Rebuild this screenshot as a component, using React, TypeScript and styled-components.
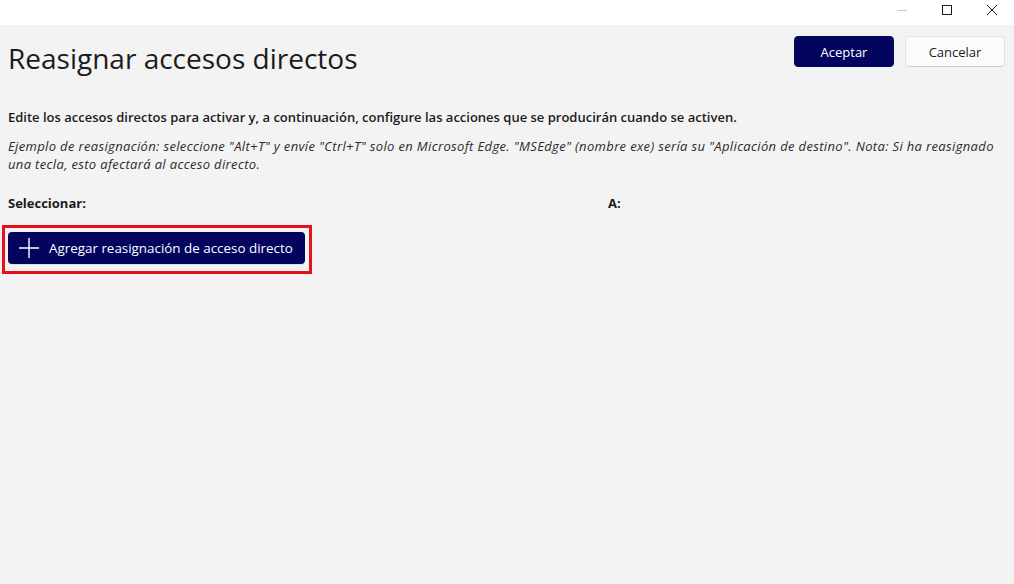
import React from "react";
import styled, { createGlobalStyle } from "styled-components";

const GlobalStyle = createGlobalStyle`
  html, body {
    margin: 0;
    padding: 0;
    height: 100%;
    background: #f3f3f3;
    font-family: "Open Sans", "Noto Sans", sans-serif;
    color: #1b1b1b;
  }
`;

const App = () => {
  return (
    <Window>
      <GlobalStyle />
      <TitleBar>
        <CaptionButton aria-label="Minimizar">
          <svg width="10" height="10" viewBox="0 0 10 10">
            <line x1="0" y1="5.5" x2="10" y2="5.5" stroke="#c8c8c8" strokeWidth="1" />
          </svg>
        </CaptionButton>
        <CaptionButton aria-label="Maximizar">
          <svg width="10" height="10" viewBox="0 0 10 10">
            <rect x="0.5" y="0.5" width="9" height="9" fill="none" stroke="#1b1b1b" strokeWidth="1" />
          </svg>
        </CaptionButton>
        <CaptionButton aria-label="Cerrar">
          <svg width="10" height="10" viewBox="0 0 10 10">
            <path d="M0 0 L10 10 M10 0 L0 10" stroke="#1b1b1b" strokeWidth="1" />
          </svg>
        </CaptionButton>
      </TitleBar>
      <Body>
        <Header>
          <Title>Reasignar accesos directos</Title>
          <Actions>
            <DialogButton primary>Aceptar</DialogButton>
            <DialogButton>Cancelar</DialogButton>
          </Actions>
        </Header>
        <Lead>
          Edite los accesos directos para activar y, a continuación, configure las acciones que se producirán cuando se activen.
        </Lead>
        <Example>
          Ejemplo de reasignación: seleccione "Alt+T" y envíe "Ctrl+T" solo en Microsoft Edge. "MSEdge" (nombre exe) sería su "Aplicación de destino". Nota: Si ha reasignado una tecla, esto afectará al acceso directo.
        </Example>
        <Columns>
          <ColumnLabel>Seleccionar:</ColumnLabel>
          <ColumnLabel>A:</ColumnLabel>
        </Columns>
        <Highlight>
          <AddButton>
            <svg width="20" height="20" viewBox="0 0 20 20">
              <path d="M10 0 V20 M0 10 H20" stroke="#fff" strokeWidth="1.4" />
            </svg>
            Agregar reasignación de acceso directo
          </AddButton>
        </Highlight>
      </Body>
    </Window>
  );
};

export default App;

const Window = styled.div`
  width: 1014px;
  height: 584px;
  display: flex;
  flex-direction: column;
  background: #f3f3f3;
  overflow: hidden;
`;

const TitleBar = styled.div`
  height: 25px;
  background: #ffffff;
  display: flex;
  justify-content: flex-end;
  align-items: center;
`;

const CaptionButton = styled.div`
  width: 45px;
  height: 25px;
  display: flex;
  align-items: center;
  justify-content: center;
  margin-top: -5px;
`;

const Body = styled.div`
  flex: 1;
  padding: 12px 9px 0 8px;
  display: flex;
  flex-direction: column;
`;

const Header = styled.div`
  display: flex;
  justify-content: space-between;
  align-items: flex-start;
`;

const Title = styled.h1`
  margin: 3px 0 0;
  font-size: 28px;
  font-weight: 400;
  line-height: 36px;
  color: #1b1b1b;
`;

const Actions = styled.div`
  display: flex;
  gap: 11px;
  margin-top: -1px;
`;

const DialogButton = styled.button<{ primary?: boolean }>`
  width: 100px;
  height: 31px;
  border-radius: 4px;
  font-family: inherit;
  font-size: 13px;
  cursor: pointer;
  background: ${({ primary }) => (primary ? "#03045e" : "#fbfbfb")};
  color: ${({ primary }) => (primary ? "#ffffff" : "#1b1b1b")};
  border: 1px solid ${({ primary }) => (primary ? "#03045e" : "#e3e3e3")};
  border-bottom-color: ${({ primary }) => (primary ? "#03045e" : "#cfcfcf")};
`;

const Lead = styled.p`
  margin: 32px 0 0;
  font-size: 13px;
  font-weight: 600;
  line-height: 18px;
  color: #1b1b1b;
`;

const Example = styled.p`
  margin: 11px 0 0;
  font-size: 13px;
  font-style: italic;
  letter-spacing: 0.35px;
  line-height: 18px;
  color: #2b2b2b;
`;

const Columns = styled.div`
  margin-top: 21px;
  display: grid;
  grid-template-columns: 600px 1fr;
`;

const ColumnLabel = styled.div`
  font-size: 13px;
  font-weight: 700;
  line-height: 18px;
`;

const Highlight = styled.div`
  align-self: flex-start;
  margin: 13px 0 0 -6px;
  padding: 4px 4px 7px 3px;
  border: 3px solid #e8101a;
`;

const AddButton = styled.button`
  display: flex;
  align-items: center;
  gap: 10px;
  height: 32px;
  padding: 0 12px 0 11px;
  border: none;
  border-radius: 4px;
  background: #03045e;
  color: #ffffff;
  font-family: inherit;
  font-size: 13.4px;
  cursor: pointer;
  box-shadow: 0 2px 0 -1px #e0e0e0;
`;
